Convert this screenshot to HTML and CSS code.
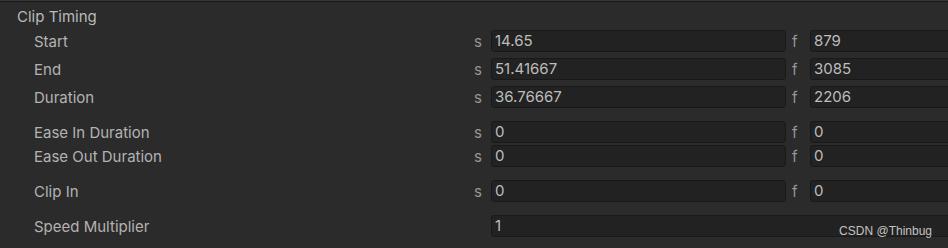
FILE: index.html
```html
<!DOCTYPE html>
<html lang="en">
<head>
    <meta charset="UTF-8">
    <meta name="viewport" content="width=device-width, initial-scale=1.0">
    <title>Clip Timing</title>
    <link rel="stylesheet" href="styles.css">
</head>
<body>

    <div class="inspector">

        <div class="section-title">Clip Timing</div>

        <div class="row row-start">
            <div class="label">Start</div>
            <div class="unit">s</div>
            <div class="field">14.65</div>
            <div class="unit unit-f">f</div>
            <div class="field field-end">879</div>
        </div>

        <div class="row row-near">
            <div class="label">End</div>
            <div class="unit">s</div>
            <div class="field">51.41667</div>
            <div class="unit unit-f">f</div>
            <div class="field field-end">3085</div>
        </div>

        <div class="row row-near">
            <div class="label">Duration</div>
            <div class="unit">s</div>
            <div class="field">36.76667</div>
            <div class="unit unit-f">f</div>
            <div class="field field-end">2206</div>
        </div>

        <div class="row row-group">
            <div class="label">Ease In Duration</div>
            <div class="unit">s</div>
            <div class="field">0</div>
            <div class="unit unit-f">f</div>
            <div class="field field-end">0</div>
        </div>

        <div class="row row-tight">
            <div class="label">Ease Out Duration</div>
            <div class="unit">s</div>
            <div class="field">0</div>
            <div class="unit unit-f">f</div>
            <div class="field field-end">0</div>
        </div>

        <div class="row row-group">
            <div class="label">Clip In</div>
            <div class="unit">s</div>
            <div class="field">0</div>
            <div class="unit unit-f">f</div>
            <div class="field field-end">0</div>
        </div>

        <div class="row row-group">
            <div class="label">Speed Multiplier</div>
            <div class="unit"></div>
            <div class="field field-end">1</div>
        </div>

    </div>

    <div class="watermark">CSDN @Thinbug</div>

</body>
</html>
```

FILE: styles.css
```css
body {
    font-family: Inter, "Noto Sans", sans-serif;
    font-size: 15px;
    background-color: #2b2b2b;
    color: #b3b3b3;
    margin: 0;
    padding: 0;
    width: 948px;
    height: 248px;
    overflow: hidden;
    position: relative;
}


.inspector {
    border-top: 1px solid #363636;
    box-shadow: inset 0 1px 0 #1a1a1a;
    padding-top: 5px;
    width: 948px;
    overflow: hidden;
}


.section-title {
    height: 22px;
    line-height: 22px;
    padding-left: 17px;
    color: #bababa;
}


.row {
    display: flex;
    align-items: center;
    height: 22px;
    margin-right: -4px;
}

.row-start { margin-top: 2px; }
.row-near { margin-top: 6px; }
.row-group { margin-top: 13px; }
.row-tight { margin-top: 2px; }


.label {
    flex-shrink: 0;
    width: 440px;
    padding-left: 34px;
    white-space: nowrap;
}


.unit {
    flex-shrink: 0;
    width: 17px;
    color: #969696;
    padding-top: 1px;
}

.unit-f {
    width: 18px;
    padding-left: 6px;
}


.field {
    flex: 0 0 295px;
    box-sizing: border-box;
    height: 22px;
    line-height: 20px;
    padding-left: 3px;
    background: #222222;
    border: 1px solid #191919;
    border-radius: 3px;
    color: #bdbdbd;
    overflow: hidden;
}

/* dernier champ : prend la place jusqu'au bord */
.field-end {
    flex: 1 1 auto;
    min-width: 0;
}


.watermark {
    position: absolute;
    right: 16px;
    top: 224px;
    font-family: "Liberation Sans", Arial, sans-serif;
    font-size: 12px;
    line-height: 14px;
    color: #c2c2c2;
}
```
